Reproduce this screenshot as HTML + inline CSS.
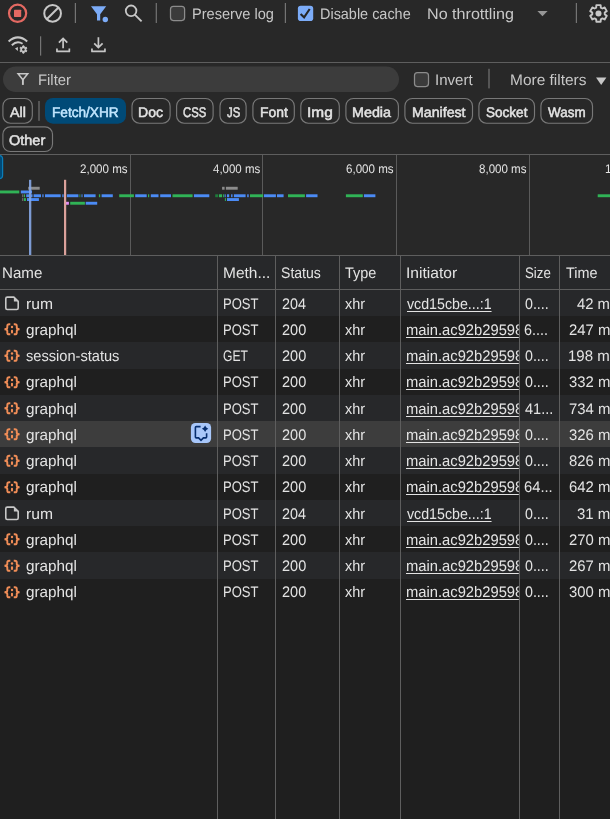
<!DOCTYPE html>
<html><head><meta charset="utf-8"><title>Network</title>
<style>
html,body{margin:0;padding:0;}
body{width:610px;height:819px;overflow:hidden;background:#282828;position:relative;font-family:"Liberation Sans",sans-serif;}
.t{position:absolute;white-space:pre;display:block;transform-origin:0 0;text-rendering:geometricPrecision;}
.a{position:absolute;}
#txt{position:absolute;left:0;top:0;width:610px;height:819px;overflow:hidden;will-change:transform;}
</style></head><body>
<svg class="a" style="left:0;top:0" width="610" height="819" viewBox="0 0 610 819">
<rect x="0" y="62" width="610" height="1" fill="#5e5e5e"/>
<circle cx="17.6" cy="13.3" r="8.6" fill="none" stroke="#e46962" stroke-width="2.2"/>
<rect x="14" y="9.7" width="7.2" height="7.2" rx="0.6" fill="#e46962"/>
<circle cx="52.6" cy="13.4" r="8.35" fill="none" stroke="#c7c7c7" stroke-width="2"/>
<line x1="46.7" y1="19.3" x2="58.5" y2="7.5" stroke="#c7c7c7" stroke-width="2"/>
<rect x="74.80" y="3.00" width="1.2" height="20.00" fill="#747474"/>
<path d="M91 6.3 H106.2 L100.2 14.2 V20.6 H97 V14.2 Z" fill="#7cacf8"/>
<circle cx="105.3" cy="19.5" r="2.7" fill="#7cacf8"/>
<circle cx="131.1" cy="10.8" r="5.3" fill="none" stroke="#c7c7c7" stroke-width="1.8"/>
<line x1="135" y1="14.8" x2="141.6" y2="21.4" stroke="#c7c7c7" stroke-width="1.9"/>
<rect x="155.70" y="3.00" width="1.2" height="20.00" fill="#747474"/>
<rect x="170.50" y="6.40" width="14.10" height="14.10" rx="2.9" fill="#3b3b3b" stroke="#8c8c8c" stroke-width="1.25"/>
<rect x="284.80" y="3.00" width="1.2" height="20.00" fill="#747474"/>
<rect x="297.90" y="5.80" width="15.30" height="15.30" rx="2.8" fill="#7cacf8"/>
<path d="M300.60 14.00 L304.10 17.30 L309.70 9.00" fill="none" stroke="#262626" stroke-width="2.1" />
<path d="M537.4 10.9 H547.6 L542.5 16.2 Z" fill="#969696"/>
<rect x="575.80" y="3.00" width="1.2" height="20.00" fill="#747474"/>
<path d="M596.36 5.12 L600.64 5.12 L600.82 7.59 L602.41 8.51 L604.64 7.43 L606.78 11.14 L604.73 12.53 L604.73 14.37 L606.78 15.76 L604.64 19.47 L602.41 18.39 L600.82 19.31 L600.64 21.78 L596.36 21.78 L596.18 19.31 L594.59 18.39 L592.36 19.47 L590.22 15.76 L592.27 14.37 L592.27 12.53 L590.22 11.14 L592.36 7.43 L594.59 8.51 L596.18 7.59 Z" fill="none" stroke="#c7c7c7" stroke-width="1.9" stroke-linejoin="round"/>
<circle cx="598.50" cy="13.45" r="3.00" fill="#c7c7c7"/>
<path d="M8.6 41.4 Q17.9 33.3 27.2 41.4" fill="none" stroke="#c7c7c7" stroke-width="2"/>
<path d="M11.8 45.2 Q17 40.2 22.6 43.8" fill="none" stroke="#c7c7c7" stroke-width="1.9"/>
<path d="M15.0 48.5 L17.9 47.0 L17.9 51.0 Z" fill="#c7c7c7"/>
<path d="M22.74 45.86 L24.06 45.86 L24.28 47.05 L25.08 47.51 L26.23 47.11 L26.88 48.25 L25.96 49.04 L25.96 49.96 L26.88 50.75 L26.23 51.89 L25.08 51.49 L24.28 51.95 L24.06 53.14 L22.74 53.14 L22.52 51.95 L21.72 51.49 L20.57 51.89 L19.92 50.75 L20.84 49.96 L20.84 49.04 L19.92 48.25 L20.57 47.11 L21.72 47.51 L22.52 47.05 Z" fill="#c7c7c7" stroke="#c7c7c7" stroke-width="0.9" stroke-linejoin="round"/>
<circle cx="23.40" cy="49.50" r="1.30" fill="#282828"/>
<rect x="40.00" y="36.30" width="1.2" height="19.30" fill="#747474"/>
<path d="M56.95 48.6 V51.4 H69.35 V48.6" fill="none" stroke="#c7c7c7" stroke-width="1.7" stroke-linejoin="round"/>
<path d="M63.1 48.2 V38.6 M58.9 42.6 L63.1 38.4 L67.3 42.6" fill="none" stroke="#c7c7c7" stroke-width="1.7"/>
<path d="M91.95 48.6 V51.4 H104.95 V48.6" fill="none" stroke="#c7c7c7" stroke-width="1.7" stroke-linejoin="round"/>
<path d="M98.4 37.3 V47.2 M94.2 43.4 L98.4 47.6 L102.6 43.4" fill="none" stroke="#c7c7c7" stroke-width="1.7"/>
<rect x="3" y="66.6" width="396" height="25.5" rx="12.75" fill="#3c3c3c"/>
<path d="M18.1 73.85 H27.7 L22.9 79.7 Z" fill="none" stroke="#c7c7c7" stroke-width="1.5" stroke-linejoin="miter"/>
<rect x="21.95" y="79.0" width="1.9" height="5.9" fill="#c7c7c7"/>
<rect x="414.50" y="72.50" width="14.00" height="14.00" rx="2.9" fill="#3b3b3b" stroke="#8c8c8c" stroke-width="1.25"/>
<rect x="488.40" y="68.80" width="1.2" height="19.60" fill="#747474"/>
<path d="M596 77.6 H606.4 L601.2 85 Z" fill="#c7c7c7"/>
<rect x="2.90" y="98.50" width="29.40" height="24.70" rx="7.5" fill="none" stroke="#787878" stroke-width="1.15"/>
<rect x="38.40" y="101.00" width="1.2" height="19.80" fill="#747474"/>
<rect x="45.00" y="98.00" width="81.00" height="25.70" rx="8" fill="#004a77"/>
<rect x="132.00" y="98.50" width="38.10" height="24.70" rx="7.5" fill="none" stroke="#787878" stroke-width="1.15"/>
<rect x="176.60" y="98.50" width="36.50" height="24.70" rx="7.5" fill="none" stroke="#787878" stroke-width="1.15"/>
<rect x="220.00" y="98.50" width="26.10" height="24.70" rx="7.5" fill="none" stroke="#787878" stroke-width="1.15"/>
<rect x="252.90" y="98.50" width="41.40" height="24.70" rx="7.5" fill="none" stroke="#787878" stroke-width="1.15"/>
<rect x="300.80" y="98.50" width="38.50" height="24.70" rx="7.5" fill="none" stroke="#787878" stroke-width="1.15"/>
<rect x="345.90" y="98.50" width="52.50" height="24.70" rx="7.5" fill="none" stroke="#787878" stroke-width="1.15"/>
<rect x="404.90" y="98.50" width="67.60" height="24.70" rx="7.5" fill="none" stroke="#787878" stroke-width="1.15"/>
<rect x="478.90" y="98.50" width="55.60" height="24.70" rx="7.5" fill="none" stroke="#787878" stroke-width="1.15"/>
<rect x="540.90" y="98.50" width="51.60" height="24.70" rx="7.5" fill="none" stroke="#787878" stroke-width="1.15"/>
<rect x="2.90" y="126.80" width="49.60" height="24.70" rx="7.5" fill="none" stroke="#787878" stroke-width="1.15"/>
<rect x="0" y="154" width="610" height="1" fill="#5e5e5e"/>
<rect x="130" y="155" width="1" height="100" fill="#5a5a5a"/>
<rect x="262" y="155" width="1" height="100" fill="#5a5a5a"/>
<rect x="396" y="155" width="1" height="100" fill="#5a5a5a"/>
<rect x="529" y="155" width="1" height="100" fill="#5a5a5a"/>
<rect x="-6" y="155.6" width="8.6" height="23" rx="3" fill="#004a77" stroke="#0a7db8" stroke-width="1.2"/>
<rect x="28.20" y="186.80" width="11.50" height="2.90" fill="#8c8c8c"/>
<rect x="0.00" y="190.50" width="19.30" height="2.90" fill="#30b356"/>
<rect x="20.80" y="190.50" width="11.20" height="2.90" fill="#4b8bf5"/>
<rect x="22.00" y="194.30" width="1.40" height="2.90" fill="#666"/>
<rect x="24.00" y="194.30" width="1.00" height="2.90" fill="#30b356"/>
<rect x="26.20" y="194.30" width="3.00" height="2.90" fill="#4b8bf5"/>
<rect x="31.00" y="194.30" width="1.50" height="2.90" fill="#4b8bf5"/>
<rect x="33.60" y="194.30" width="7.40" height="2.90" fill="#4b8bf5"/>
<rect x="42.30" y="194.30" width="1.30" height="2.90" fill="#4b8bf5"/>
<rect x="45.00" y="194.30" width="15.70" height="2.90" fill="#4b8bf5"/>
<rect x="62.30" y="194.30" width="1.30" height="2.90" fill="#4b8bf5"/>
<rect x="66.90" y="194.30" width="11.50" height="2.90" fill="#4b8bf5"/>
<rect x="79.50" y="194.30" width="0.80" height="2.90" fill="#30b356"/>
<rect x="81.50" y="194.30" width="1.00" height="2.90" fill="#4b8bf5"/>
<rect x="84.00" y="194.30" width="11.60" height="2.90" fill="#4b8bf5"/>
<rect x="98.90" y="194.30" width="1.30" height="2.90" fill="#30b356"/>
<rect x="101.60" y="194.30" width="11.20" height="2.90" fill="#4b8bf5"/>
<rect x="119.20" y="194.30" width="14.70" height="2.90" fill="#30b356"/>
<rect x="135.20" y="194.30" width="11.50" height="2.90" fill="#4b8bf5"/>
<rect x="148.00" y="194.30" width="1.20" height="2.90" fill="#30b356"/>
<rect x="150.80" y="194.30" width="7.70" height="2.90" fill="#4b8bf5"/>
<rect x="160.20" y="194.30" width="10.80" height="2.90" fill="#4b8bf5"/>
<rect x="172.50" y="194.30" width="20.10" height="2.90" fill="#30b356"/>
<rect x="193.90" y="194.30" width="15.40" height="2.90" fill="#4b8bf5"/>
<rect x="215.20" y="194.30" width="2.80" height="2.90" fill="#1e7a3a"/>
<rect x="218.90" y="194.30" width="3.20" height="2.90" fill="#30b356"/>
<rect x="223.00" y="194.30" width="0.90" height="2.90" fill="#30b356"/>
<rect x="224.60" y="194.30" width="1.10" height="2.90" fill="#4b8bf5"/>
<rect x="227.00" y="194.30" width="2.20" height="2.90" fill="#4b8bf5"/>
<rect x="231.10" y="194.30" width="1.40" height="2.90" fill="#4b8bf5"/>
<rect x="233.90" y="194.30" width="11.70" height="2.90" fill="#4b8bf5"/>
<rect x="247.20" y="194.30" width="1.50" height="2.90" fill="#4b8bf5"/>
<rect x="250.00" y="194.30" width="13.10" height="2.90" fill="#30b356"/>
<rect x="263.90" y="194.30" width="12.00" height="2.90" fill="#4b8bf5"/>
<rect x="277.00" y="194.30" width="6.60" height="2.90" fill="#4b8bf5"/>
<rect x="288.00" y="194.30" width="16.90" height="2.90" fill="#30b356"/>
<rect x="306.10" y="194.30" width="11.40" height="2.90" fill="#4b8bf5"/>
<rect x="345.90" y="194.30" width="16.90" height="2.90" fill="#30b356"/>
<rect x="363.90" y="194.30" width="11.50" height="2.90" fill="#4b8bf5"/>
<rect x="597.70" y="194.30" width="12.30" height="2.90" fill="#30b356"/>
<rect x="22.00" y="198.10" width="1.40" height="2.90" fill="#666"/>
<rect x="24.00" y="198.10" width="1.90" height="2.90" fill="#30b356"/>
<rect x="27.00" y="198.10" width="11.90" height="2.90" fill="#4b8bf5"/>
<rect x="222.10" y="186.80" width="2.50" height="2.90" fill="#8c8c8c"/>
<rect x="225.90" y="186.80" width="11.80" height="2.90" fill="#8c8c8c"/>
<rect x="224.90" y="198.10" width="1.00" height="2.90" fill="#30b356"/>
<rect x="227.00" y="198.10" width="11.90" height="2.90" fill="#4b8bf5"/>
<rect x="66.00" y="201.80" width="2.90" height="2.90" fill="#e08cf5"/>
<rect x="70.20" y="201.80" width="14.70" height="2.90" fill="#30b356"/>
<rect x="85.70" y="201.80" width="11.50" height="2.90" fill="#4b8bf5"/>
<rect x="29" y="179.8" width="2.3" height="75.7" fill="#86a7e6" opacity="0.9"/>
<rect x="64" y="179.8" width="2.2" height="75.7" fill="#dba19b"/>
<rect x="0" y="255" width="610" height="35" fill="#27282a"/>
<rect x="0" y="290" width="610" height="529" fill="#1f1f1f"/>
<rect x="0" y="290" width="610" height="26" fill="#27282a"/>
<rect x="0" y="342" width="610" height="27" fill="#27282a"/>
<rect x="0" y="395" width="610" height="26" fill="#27282a"/>
<rect x="0" y="421" width="610" height="26" fill="#3d3d3d"/>
<rect x="0" y="447" width="610" height="27" fill="#27282a"/>
<rect x="0" y="500" width="610" height="26" fill="#27282a"/>
<rect x="0" y="552" width="610" height="27" fill="#27282a"/>
<rect x="0" y="255" width="610" height="1" fill="#5e5e5e"/>
<rect x="0" y="289" width="610" height="1" fill="#5e5e5e"/>
<rect x="217" y="256" width="1" height="563" fill="#5e5e5e"/>
<rect x="275" y="256" width="1" height="563" fill="#5e5e5e"/>
<rect x="339" y="256" width="1" height="563" fill="#5e5e5e"/>
<rect x="400" y="256" width="1" height="563" fill="#5e5e5e"/>
<rect x="519" y="256" width="1" height="563" fill="#5e5e5e"/>
<rect x="559" y="256" width="1" height="563" fill="#5e5e5e"/>
<path d="M7.30 297.10 H13.90 L18.20 301.40 V308.00 Q18.20 309.50 16.70 309.50 H7.30 Q5.80 309.50 5.80 308.00 V298.60 Q5.80 297.10 7.30 297.10 Z" fill="none" stroke="#c7c7c7" stroke-width="1.6" stroke-linejoin="round"/>
<path d="M13.90 297.10 V301.40 H18.20 Z" fill="#c7c7c7"/>
<path d="M10.30 324.30 H9.10 Q7.30 324.30 7.30 325.90 V327.60 Q7.30 329.30 4.45 329.30 Q7.30 329.30 7.30 331.00 V332.70 Q7.30 334.30 9.10 334.30 H10.30" fill="none" stroke="#f08d57" stroke-width="1.9"/>
<path d="M13.75 324.30 H14.95 Q16.75 324.30 16.75 325.90 V327.60 Q16.75 329.30 19.60 329.30 Q16.75 329.30 16.75 331.00 V332.70 Q16.75 334.30 14.95 334.30 H13.75" fill="none" stroke="#f08d57" stroke-width="1.9"/>
<circle cx="12.0" cy="327.00" r="1.2" fill="#f08d57"/>
<path d="M12.0 330.90 V332.50" stroke="#f08d57" stroke-width="2.1" stroke-linecap="round" fill="none"/>
<path d="M10.30 350.80 H9.10 Q7.30 350.80 7.30 352.40 V354.10 Q7.30 355.80 4.45 355.80 Q7.30 355.80 7.30 357.50 V359.20 Q7.30 360.80 9.10 360.80 H10.30" fill="none" stroke="#f08d57" stroke-width="1.9"/>
<path d="M13.75 350.80 H14.95 Q16.75 350.80 16.75 352.40 V354.10 Q16.75 355.80 19.60 355.80 Q16.75 355.80 16.75 357.50 V359.20 Q16.75 360.80 14.95 360.80 H13.75" fill="none" stroke="#f08d57" stroke-width="1.9"/>
<circle cx="12.0" cy="353.50" r="1.2" fill="#f08d57"/>
<path d="M12.0 357.40 V359.00" stroke="#f08d57" stroke-width="2.1" stroke-linecap="round" fill="none"/>
<path d="M10.30 377.30 H9.10 Q7.30 377.30 7.30 378.90 V380.60 Q7.30 382.30 4.45 382.30 Q7.30 382.30 7.30 384.00 V385.70 Q7.30 387.30 9.10 387.30 H10.30" fill="none" stroke="#f08d57" stroke-width="1.9"/>
<path d="M13.75 377.30 H14.95 Q16.75 377.30 16.75 378.90 V380.60 Q16.75 382.30 19.60 382.30 Q16.75 382.30 16.75 384.00 V385.70 Q16.75 387.30 14.95 387.30 H13.75" fill="none" stroke="#f08d57" stroke-width="1.9"/>
<circle cx="12.0" cy="380.00" r="1.2" fill="#f08d57"/>
<path d="M12.0 383.90 V385.50" stroke="#f08d57" stroke-width="2.1" stroke-linecap="round" fill="none"/>
<path d="M10.30 403.30 H9.10 Q7.30 403.30 7.30 404.90 V406.60 Q7.30 408.30 4.45 408.30 Q7.30 408.30 7.30 410.00 V411.70 Q7.30 413.30 9.10 413.30 H10.30" fill="none" stroke="#f08d57" stroke-width="1.9"/>
<path d="M13.75 403.30 H14.95 Q16.75 403.30 16.75 404.90 V406.60 Q16.75 408.30 19.60 408.30 Q16.75 408.30 16.75 410.00 V411.70 Q16.75 413.30 14.95 413.30 H13.75" fill="none" stroke="#f08d57" stroke-width="1.9"/>
<circle cx="12.0" cy="406.00" r="1.2" fill="#f08d57"/>
<path d="M12.0 409.90 V411.50" stroke="#f08d57" stroke-width="2.1" stroke-linecap="round" fill="none"/>
<path d="M10.30 429.30 H9.10 Q7.30 429.30 7.30 430.90 V432.60 Q7.30 434.30 4.45 434.30 Q7.30 434.30 7.30 436.00 V437.70 Q7.30 439.30 9.10 439.30 H10.30" fill="none" stroke="#f08d57" stroke-width="1.9"/>
<path d="M13.75 429.30 H14.95 Q16.75 429.30 16.75 430.90 V432.60 Q16.75 434.30 19.60 434.30 Q16.75 434.30 16.75 436.00 V437.70 Q16.75 439.30 14.95 439.30 H13.75" fill="none" stroke="#f08d57" stroke-width="1.9"/>
<circle cx="12.0" cy="432.00" r="1.2" fill="#f08d57"/>
<path d="M12.0 435.90 V437.50" stroke="#f08d57" stroke-width="2.1" stroke-linecap="round" fill="none"/>
<path d="M10.30 455.80 H9.10 Q7.30 455.80 7.30 457.40 V459.10 Q7.30 460.80 4.45 460.80 Q7.30 460.80 7.30 462.50 V464.20 Q7.30 465.80 9.10 465.80 H10.30" fill="none" stroke="#f08d57" stroke-width="1.9"/>
<path d="M13.75 455.80 H14.95 Q16.75 455.80 16.75 457.40 V459.10 Q16.75 460.80 19.60 460.80 Q16.75 460.80 16.75 462.50 V464.20 Q16.75 465.80 14.95 465.80 H13.75" fill="none" stroke="#f08d57" stroke-width="1.9"/>
<circle cx="12.0" cy="458.50" r="1.2" fill="#f08d57"/>
<path d="M12.0 462.40 V464.00" stroke="#f08d57" stroke-width="2.1" stroke-linecap="round" fill="none"/>
<path d="M10.30 482.30 H9.10 Q7.30 482.30 7.30 483.90 V485.60 Q7.30 487.30 4.45 487.30 Q7.30 487.30 7.30 489.00 V490.70 Q7.30 492.30 9.10 492.30 H10.30" fill="none" stroke="#f08d57" stroke-width="1.9"/>
<path d="M13.75 482.30 H14.95 Q16.75 482.30 16.75 483.90 V485.60 Q16.75 487.30 19.60 487.30 Q16.75 487.30 16.75 489.00 V490.70 Q16.75 492.30 14.95 492.30 H13.75" fill="none" stroke="#f08d57" stroke-width="1.9"/>
<circle cx="12.0" cy="485.00" r="1.2" fill="#f08d57"/>
<path d="M12.0 488.90 V490.50" stroke="#f08d57" stroke-width="2.1" stroke-linecap="round" fill="none"/>
<path d="M7.30 507.10 H13.90 L18.20 511.40 V518.00 Q18.20 519.50 16.70 519.50 H7.30 Q5.80 519.50 5.80 518.00 V508.60 Q5.80 507.10 7.30 507.10 Z" fill="none" stroke="#c7c7c7" stroke-width="1.6" stroke-linejoin="round"/>
<path d="M13.90 507.10 V511.40 H18.20 Z" fill="#c7c7c7"/>
<path d="M10.30 534.30 H9.10 Q7.30 534.30 7.30 535.90 V537.60 Q7.30 539.30 4.45 539.30 Q7.30 539.30 7.30 541.00 V542.70 Q7.30 544.30 9.10 544.30 H10.30" fill="none" stroke="#f08d57" stroke-width="1.9"/>
<path d="M13.75 534.30 H14.95 Q16.75 534.30 16.75 535.90 V537.60 Q16.75 539.30 19.60 539.30 Q16.75 539.30 16.75 541.00 V542.70 Q16.75 544.30 14.95 544.30 H13.75" fill="none" stroke="#f08d57" stroke-width="1.9"/>
<circle cx="12.0" cy="537.00" r="1.2" fill="#f08d57"/>
<path d="M12.0 540.90 V542.50" stroke="#f08d57" stroke-width="2.1" stroke-linecap="round" fill="none"/>
<path d="M10.30 560.80 H9.10 Q7.30 560.80 7.30 562.40 V564.10 Q7.30 565.80 4.45 565.80 Q7.30 565.80 7.30 567.50 V569.20 Q7.30 570.80 9.10 570.80 H10.30" fill="none" stroke="#f08d57" stroke-width="1.9"/>
<path d="M13.75 560.80 H14.95 Q16.75 560.80 16.75 562.40 V564.10 Q16.75 565.80 19.60 565.80 Q16.75 565.80 16.75 567.50 V569.20 Q16.75 570.80 14.95 570.80 H13.75" fill="none" stroke="#f08d57" stroke-width="1.9"/>
<circle cx="12.0" cy="563.50" r="1.2" fill="#f08d57"/>
<path d="M12.0 567.40 V569.00" stroke="#f08d57" stroke-width="2.1" stroke-linecap="round" fill="none"/>
<path d="M10.30 587.30 H9.10 Q7.30 587.30 7.30 588.90 V590.60 Q7.30 592.30 4.45 592.30 Q7.30 592.30 7.30 594.00 V595.70 Q7.30 597.30 9.10 597.30 H10.30" fill="none" stroke="#f08d57" stroke-width="1.9"/>
<path d="M13.75 587.30 H14.95 Q16.75 587.30 16.75 588.90 V590.60 Q16.75 592.30 19.60 592.30 Q16.75 592.30 16.75 594.00 V595.70 Q16.75 597.30 14.95 597.30 H13.75" fill="none" stroke="#f08d57" stroke-width="1.9"/>
<circle cx="12.0" cy="590.00" r="1.2" fill="#f08d57"/>
<path d="M12.0 593.90 V595.50" stroke="#f08d57" stroke-width="2.1" stroke-linecap="round" fill="none"/>
<rect x="190.9" y="422.9" width="20.2" height="20.2" rx="4.5" fill="#a8c7fa"/>
<path d="M200.6 426.6 H196.3 Q195.4 426.6 195.4 427.5 V437 Q195.4 437.9 196.3 437.9 H198.6 L201 440.3 L203.4 437.9 H205.7 Q206.6 437.9 206.6 437 V433.2" fill="none" stroke="#062e6f" stroke-width="1.6"/>
<path d="M205.10 425.60 Q205.95 427.95 208.30 428.80 Q205.95 429.65 205.10 432.00 Q204.25 429.65 201.90 428.80 Q204.25 427.95 205.10 425.60 Z" fill="#062e6f"/>
</svg>
<div id="txt">
<span class="t" id="pres" style="left:191.65px;top:7.00px;font-size:15.3px;line-height:16px;color:#c7c7c7;transform:scaleX(0.9537);">Preserve log</span>
<span class="t" id="dis" style="left:320.46px;top:7.00px;font-size:15.3px;line-height:16px;color:#c7c7c7;transform:scaleX(0.9435);">Disable cache</span>
<span class="t" id="thr" style="left:426.84px;top:7.00px;font-size:15.3px;line-height:16px;color:#c7c7c7;transform:scaleX(1.0537);">No throttling</span>
<span class="t" id="filt" style="left:37.83px;top:73.00px;font-size:15.3px;line-height:16px;color:#c7c7c7;transform:scaleX(0.9696);">Filter</span>
<span class="t" id="inv" style="left:435.35px;top:73.00px;font-size:15.3px;line-height:16px;color:#c7c7c7;transform:scaleX(0.9835);">Invert</span>
<span class="t" id="more" style="left:510.49px;top:73.00px;font-size:15.3px;line-height:16px;color:#c7c7c7;transform:scaleX(1.0109);">More filters</span>
<span class="t" id="c_all" style="left:10.05px;top:105.00px;font-size:14px;line-height:14px;color:#e3e3e3;transform:scaleX(1.0188);-webkit-text-stroke:0.5px currentColor;">All</span>
<span class="t" id="c_fetch" style="left:52.13px;top:105.00px;font-size:14px;line-height:14px;color:#c2e7ff;transform:scaleX(0.9717);-webkit-text-stroke:0.5px currentColor;">Fetch/XHR</span>
<span class="t" id="c_doc" style="left:138.20px;top:105.00px;font-size:14px;line-height:14px;color:#e3e3e3;transform:scaleX(1.0042);-webkit-text-stroke:0.5px currentColor;">Doc</span>
<span class="t" id="c_css" style="left:183.46px;top:105.00px;font-size:14px;line-height:14px;color:#e3e3e3;transform:scaleX(0.8055);-webkit-text-stroke:0.5px currentColor;">CSS</span>
<span class="t" id="c_js" style="left:226.71px;top:105.00px;font-size:14px;line-height:14px;color:#e3e3e3;transform:scaleX(0.8110);-webkit-text-stroke:0.5px currentColor;">JS</span>
<span class="t" id="c_font" style="left:259.81px;top:105.00px;font-size:14px;line-height:14px;color:#e3e3e3;transform:scaleX(0.9938);-webkit-text-stroke:0.5px currentColor;">Font</span>
<span class="t" id="c_img" style="left:307.10px;top:105.00px;font-size:14px;line-height:14px;color:#e3e3e3;transform:scaleX(1.1019);-webkit-text-stroke:0.5px currentColor;">Img</span>
<span class="t" id="c_media" style="left:352.09px;top:105.00px;font-size:14px;line-height:14px;color:#e3e3e3;transform:scaleX(1.0233);-webkit-text-stroke:0.5px currentColor;">Media</span>
<span class="t" id="c_man" style="left:411.70px;top:105.00px;font-size:14px;line-height:14px;color:#e3e3e3;transform:scaleX(1.0119);-webkit-text-stroke:0.5px currentColor;">Manifest</span>
<span class="t" id="c_sock" style="left:485.83px;top:105.00px;font-size:14px;line-height:14px;color:#e3e3e3;transform:scaleX(0.9677);-webkit-text-stroke:0.5px currentColor;">Socket</span>
<span class="t" id="c_wasm" style="left:548.25px;top:105.00px;font-size:14px;line-height:14px;color:#e3e3e3;transform:scaleX(0.9599);-webkit-text-stroke:0.5px currentColor;">Wasm</span>
<span class="t" id="c_other" style="left:9.23px;top:133.00px;font-size:14px;line-height:14px;color:#e3e3e3;transform:scaleX(1.0344);-webkit-text-stroke:0.5px currentColor;">Other</span>
<span class="t" id="ov0" style="left:79.61px;top:163.00px;font-size:12.5px;line-height:13px;color:#e3e3e3;transform:scaleX(0.9245);">2,000 ms</span>
<span class="t" id="ov1" style="left:213.00px;top:163.00px;font-size:12.5px;line-height:13px;color:#e3e3e3;transform:scaleX(0.9184);">4,000 ms</span>
<span class="t" id="ov2" style="left:345.72px;top:163.00px;font-size:12.5px;line-height:13px;color:#e3e3e3;transform:scaleX(0.9252);">6,000 ms</span>
<span class="t" id="ov3" style="left:478.86px;top:163.00px;font-size:12.5px;line-height:13px;color:#e3e3e3;transform:scaleX(0.9238);">8,000 ms</span>
<span class="t" id="ov4" style="left:604.56px;top:163.00px;font-size:12.5px;line-height:13px;color:#e3e3e3;transform:scaleX(0.9398);">10,000 ms</span>
<span class="t" id="h_name" style="left:2.41px;top:266.00px;font-size:15.3px;line-height:16px;color:#e3e3e3;transform:scaleX(0.9898);">Name</span>
<span class="t" id="h_meth" style="left:223.09px;top:266.00px;font-size:15.3px;line-height:16px;color:#e3e3e3;transform:scaleX(1.0112);">Meth...</span>
<span class="t" id="h_stat" style="left:281.27px;top:266.00px;font-size:15.3px;line-height:16px;color:#e3e3e3;transform:scaleX(0.9194);">Status</span>
<span class="t" id="h_type" style="left:344.65px;top:266.00px;font-size:15.3px;line-height:16px;color:#e3e3e3;transform:scaleX(0.9434);">Type</span>
<span class="t" id="h_init" style="left:405.70px;top:266.00px;font-size:15.3px;line-height:16px;color:#e3e3e3;transform:scaleX(1.0199);">Initiator</span>
<span class="t" id="h_size" style="left:525.12px;top:266.00px;font-size:15.3px;line-height:16px;color:#e3e3e3;transform:scaleX(0.8660);">Size</span>
<span class="t" id="h_time" style="left:565.65px;top:266.00px;font-size:15.3px;line-height:16px;color:#e3e3e3;transform:scaleX(0.9408);">Time</span>
<span class="t" id="n0" style="left:25.58px;top:297.00px;font-size:15.3px;line-height:16px;color:#e3e3e3;transform:scaleX(1.0249);">rum</span>
<span class="t" id="m0" style="left:223.06px;top:297.00px;font-size:15.3px;line-height:16px;color:#e3e3e3;transform:scaleX(0.8516);">POST</span>
<span class="t" id="s0" style="left:281.60px;top:297.00px;font-size:15.3px;line-height:16px;color:#e3e3e3;transform:scaleX(0.9388);">204</span>
<span class="t" id="ty0" style="left:344.65px;top:297.00px;font-size:15.3px;line-height:16px;color:#e3e3e3;transform:scaleX(0.9438);">xhr</span>
<span class="t" id="i0" style="left:406.90px;top:297.00px;font-size:15.3px;line-height:16px;color:#e3e3e3;transform:scaleX(0.9292);text-decoration:underline;text-underline-offset:2px;text-decoration-thickness:1px;">vcd15cbe...:1</span>
<span class="t" id="z0" style="left:524.65px;top:297.00px;font-size:15.3px;line-height:16px;color:#e3e3e3;transform:scaleX(0.9295);">0....</span>
<span class="t" id="tm0" style="left:577.32px;top:297.00px;font-size:15.3px;line-height:16px;color:#e3e3e3;transform:scaleX(0.9683);">42 ms</span>
<span class="t" id="n1" style="left:26.14px;top:323.00px;font-size:15.3px;line-height:16px;color:#e3e3e3;transform:scaleX(0.9976);">graphql</span>
<span class="t" id="m1" style="left:223.06px;top:323.00px;font-size:15.3px;line-height:16px;color:#e3e3e3;transform:scaleX(0.8516);">POST</span>
<span class="t" id="s1" style="left:281.60px;top:323.00px;font-size:15.3px;line-height:16px;color:#e3e3e3;transform:scaleX(0.9482);">200</span>
<span class="t" id="ty1" style="left:344.65px;top:323.00px;font-size:15.3px;line-height:16px;color:#e3e3e3;transform:scaleX(0.9438);">xhr</span>
<span class="t" id="i1" style="left:406.04px;top:323.00px;font-size:15.3px;line-height:16px;color:#e3e3e3;transform:scaleX(0.9642);text-decoration:underline;text-underline-offset:2px;text-decoration-thickness:1px;width:116.95px;overflow:hidden;padding-bottom:5px;">main.ac92b29598</span>
<span class="t" id="z1" style="left:524.48px;top:323.00px;font-size:15.3px;line-height:16px;color:#e3e3e3;transform:scaleX(0.9365);">6....</span>
<span class="t" id="tm1" style="left:568.88px;top:323.00px;font-size:15.3px;line-height:16px;color:#e3e3e3;transform:scaleX(0.9724);">247 ms</span>
<span class="t" id="n2" style="left:25.53px;top:349.00px;font-size:15.3px;line-height:16px;color:#e3e3e3;transform:scaleX(0.9556);">session-status</span>
<span class="t" id="m2" style="left:223.47px;top:349.00px;font-size:15.3px;line-height:16px;color:#e3e3e3;transform:scaleX(0.7938);">GET</span>
<span class="t" id="s2" style="left:281.60px;top:349.00px;font-size:15.3px;line-height:16px;color:#e3e3e3;transform:scaleX(0.9482);">200</span>
<span class="t" id="ty2" style="left:344.65px;top:349.00px;font-size:15.3px;line-height:16px;color:#e3e3e3;transform:scaleX(0.9438);">xhr</span>
<span class="t" id="i2" style="left:406.04px;top:349.00px;font-size:15.3px;line-height:16px;color:#e3e3e3;transform:scaleX(0.9642);text-decoration:underline;text-underline-offset:2px;text-decoration-thickness:1px;width:116.95px;overflow:hidden;padding-bottom:5px;">main.ac92b29598</span>
<span class="t" id="z2" style="left:524.65px;top:349.00px;font-size:15.3px;line-height:16px;color:#e3e3e3;transform:scaleX(0.9295);">0....</span>
<span class="t" id="tm2" style="left:568.49px;top:349.00px;font-size:15.3px;line-height:16px;color:#e3e3e3;transform:scaleX(0.9803);">198 ms</span>
<span class="t" id="n3" style="left:26.14px;top:375.00px;font-size:15.3px;line-height:16px;color:#e3e3e3;transform:scaleX(0.9976);">graphql</span>
<span class="t" id="m3" style="left:223.06px;top:375.00px;font-size:15.3px;line-height:16px;color:#e3e3e3;transform:scaleX(0.8516);">POST</span>
<span class="t" id="s3" style="left:281.60px;top:375.00px;font-size:15.3px;line-height:16px;color:#e3e3e3;transform:scaleX(0.9482);">200</span>
<span class="t" id="ty3" style="left:344.65px;top:375.00px;font-size:15.3px;line-height:16px;color:#e3e3e3;transform:scaleX(0.9438);">xhr</span>
<span class="t" id="i3" style="left:406.04px;top:375.00px;font-size:15.3px;line-height:16px;color:#e3e3e3;transform:scaleX(0.9642);text-decoration:underline;text-underline-offset:2px;text-decoration-thickness:1px;width:116.95px;overflow:hidden;padding-bottom:5px;">main.ac92b29598</span>
<span class="t" id="z3" style="left:524.65px;top:375.00px;font-size:15.3px;line-height:16px;color:#e3e3e3;transform:scaleX(0.9295);">0....</span>
<span class="t" id="tm3" style="left:568.86px;top:375.00px;font-size:15.3px;line-height:16px;color:#e3e3e3;transform:scaleX(0.9728);">332 ms</span>
<span class="t" id="n4" style="left:26.14px;top:402.00px;font-size:15.3px;line-height:16px;color:#e3e3e3;transform:scaleX(0.9976);">graphql</span>
<span class="t" id="m4" style="left:223.06px;top:402.00px;font-size:15.3px;line-height:16px;color:#e3e3e3;transform:scaleX(0.8516);">POST</span>
<span class="t" id="s4" style="left:281.60px;top:402.00px;font-size:15.3px;line-height:16px;color:#e3e3e3;transform:scaleX(0.9482);">200</span>
<span class="t" id="ty4" style="left:344.65px;top:402.00px;font-size:15.3px;line-height:16px;color:#e3e3e3;transform:scaleX(0.9438);">xhr</span>
<span class="t" id="i4" style="left:406.04px;top:402.00px;font-size:15.3px;line-height:16px;color:#e3e3e3;transform:scaleX(0.9642);text-decoration:underline;text-underline-offset:2px;text-decoration-thickness:1px;width:116.95px;overflow:hidden;padding-bottom:5px;">main.ac92b29598</span>
<span class="t" id="z4" style="left:524.82px;top:402.00px;font-size:15.3px;line-height:16px;color:#e3e3e3;transform:scaleX(0.9503);">41...</span>
<span class="t" id="tm4" style="left:568.78px;top:402.00px;font-size:15.3px;line-height:16px;color:#e3e3e3;transform:scaleX(0.9744);">734 ms</span>
<span class="t" id="n5" style="left:26.14px;top:428.00px;font-size:15.3px;line-height:16px;color:#e3e3e3;transform:scaleX(0.9976);">graphql</span>
<span class="t" id="m5" style="left:223.06px;top:428.00px;font-size:15.3px;line-height:16px;color:#e3e3e3;transform:scaleX(0.8516);">POST</span>
<span class="t" id="s5" style="left:281.60px;top:428.00px;font-size:15.3px;line-height:16px;color:#e3e3e3;transform:scaleX(0.9482);">200</span>
<span class="t" id="ty5" style="left:344.65px;top:428.00px;font-size:15.3px;line-height:16px;color:#e3e3e3;transform:scaleX(0.9438);">xhr</span>
<span class="t" id="i5" style="left:406.04px;top:428.00px;font-size:15.3px;line-height:16px;color:#e3e3e3;transform:scaleX(0.9642);text-decoration:underline;text-underline-offset:2px;text-decoration-thickness:1px;width:116.95px;overflow:hidden;padding-bottom:5px;">main.ac92b29598</span>
<span class="t" id="z5" style="left:524.65px;top:428.00px;font-size:15.3px;line-height:16px;color:#e3e3e3;transform:scaleX(0.9295);">0....</span>
<span class="t" id="tm5" style="left:568.86px;top:428.00px;font-size:15.3px;line-height:16px;color:#e3e3e3;transform:scaleX(0.9728);">326 ms</span>
<span class="t" id="n6" style="left:26.14px;top:454.00px;font-size:15.3px;line-height:16px;color:#e3e3e3;transform:scaleX(0.9976);">graphql</span>
<span class="t" id="m6" style="left:223.06px;top:454.00px;font-size:15.3px;line-height:16px;color:#e3e3e3;transform:scaleX(0.8516);">POST</span>
<span class="t" id="s6" style="left:281.60px;top:454.00px;font-size:15.3px;line-height:16px;color:#e3e3e3;transform:scaleX(0.9482);">200</span>
<span class="t" id="ty6" style="left:344.65px;top:454.00px;font-size:15.3px;line-height:16px;color:#e3e3e3;transform:scaleX(0.9438);">xhr</span>
<span class="t" id="i6" style="left:406.04px;top:454.00px;font-size:15.3px;line-height:16px;color:#e3e3e3;transform:scaleX(0.9642);text-decoration:underline;text-underline-offset:2px;text-decoration-thickness:1px;width:116.95px;overflow:hidden;padding-bottom:5px;">main.ac92b29598</span>
<span class="t" id="z6" style="left:524.65px;top:454.00px;font-size:15.3px;line-height:16px;color:#e3e3e3;transform:scaleX(0.9295);">0....</span>
<span class="t" id="tm6" style="left:568.92px;top:454.00px;font-size:15.3px;line-height:16px;color:#e3e3e3;transform:scaleX(0.9716);">826 ms</span>
<span class="t" id="n7" style="left:26.14px;top:480.00px;font-size:15.3px;line-height:16px;color:#e3e3e3;transform:scaleX(0.9976);">graphql</span>
<span class="t" id="m7" style="left:223.06px;top:480.00px;font-size:15.3px;line-height:16px;color:#e3e3e3;transform:scaleX(0.8516);">POST</span>
<span class="t" id="s7" style="left:281.60px;top:480.00px;font-size:15.3px;line-height:16px;color:#e3e3e3;transform:scaleX(0.9482);">200</span>
<span class="t" id="ty7" style="left:344.65px;top:480.00px;font-size:15.3px;line-height:16px;color:#e3e3e3;transform:scaleX(0.9438);">xhr</span>
<span class="t" id="i7" style="left:406.04px;top:480.00px;font-size:15.3px;line-height:16px;color:#e3e3e3;transform:scaleX(0.9642);text-decoration:underline;text-underline-offset:2px;text-decoration-thickness:1px;width:116.95px;overflow:hidden;padding-bottom:5px;">main.ac92b29598</span>
<span class="t" id="z7" style="left:524.46px;top:480.00px;font-size:15.3px;line-height:16px;color:#e3e3e3;transform:scaleX(0.9629);">64...</span>
<span class="t" id="tm7" style="left:568.85px;top:480.00px;font-size:15.3px;line-height:16px;color:#e3e3e3;transform:scaleX(0.9729);">642 ms</span>
<span class="t" id="n8" style="left:25.58px;top:507.00px;font-size:15.3px;line-height:16px;color:#e3e3e3;transform:scaleX(1.0249);">rum</span>
<span class="t" id="m8" style="left:223.06px;top:507.00px;font-size:15.3px;line-height:16px;color:#e3e3e3;transform:scaleX(0.8516);">POST</span>
<span class="t" id="s8" style="left:281.60px;top:507.00px;font-size:15.3px;line-height:16px;color:#e3e3e3;transform:scaleX(0.9388);">204</span>
<span class="t" id="ty8" style="left:344.65px;top:507.00px;font-size:15.3px;line-height:16px;color:#e3e3e3;transform:scaleX(0.9438);">xhr</span>
<span class="t" id="i8" style="left:406.90px;top:507.00px;font-size:15.3px;line-height:16px;color:#e3e3e3;transform:scaleX(0.9292);text-decoration:underline;text-underline-offset:2px;text-decoration-thickness:1px;">vcd15cbe...:1</span>
<span class="t" id="z8" style="left:524.65px;top:507.00px;font-size:15.3px;line-height:16px;color:#e3e3e3;transform:scaleX(0.9295);">0....</span>
<span class="t" id="tm8" style="left:576.95px;top:507.00px;font-size:15.3px;line-height:16px;color:#e3e3e3;transform:scaleX(0.9771);">31 ms</span>
<span class="t" id="n9" style="left:26.14px;top:533.00px;font-size:15.3px;line-height:16px;color:#e3e3e3;transform:scaleX(0.9976);">graphql</span>
<span class="t" id="m9" style="left:223.06px;top:533.00px;font-size:15.3px;line-height:16px;color:#e3e3e3;transform:scaleX(0.8516);">POST</span>
<span class="t" id="s9" style="left:281.60px;top:533.00px;font-size:15.3px;line-height:16px;color:#e3e3e3;transform:scaleX(0.9482);">200</span>
<span class="t" id="ty9" style="left:344.65px;top:533.00px;font-size:15.3px;line-height:16px;color:#e3e3e3;transform:scaleX(0.9438);">xhr</span>
<span class="t" id="i9" style="left:406.04px;top:533.00px;font-size:15.3px;line-height:16px;color:#e3e3e3;transform:scaleX(0.9642);text-decoration:underline;text-underline-offset:2px;text-decoration-thickness:1px;width:116.95px;overflow:hidden;padding-bottom:5px;">main.ac92b29598</span>
<span class="t" id="z9" style="left:524.65px;top:533.00px;font-size:15.3px;line-height:16px;color:#e3e3e3;transform:scaleX(0.9295);">0....</span>
<span class="t" id="tm9" style="left:568.88px;top:533.00px;font-size:15.3px;line-height:16px;color:#e3e3e3;transform:scaleX(0.9724);">270 ms</span>
<span class="t" id="n10" style="left:26.14px;top:559.00px;font-size:15.3px;line-height:16px;color:#e3e3e3;transform:scaleX(0.9976);">graphql</span>
<span class="t" id="m10" style="left:223.06px;top:559.00px;font-size:15.3px;line-height:16px;color:#e3e3e3;transform:scaleX(0.8516);">POST</span>
<span class="t" id="s10" style="left:281.60px;top:559.00px;font-size:15.3px;line-height:16px;color:#e3e3e3;transform:scaleX(0.9482);">200</span>
<span class="t" id="ty10" style="left:344.65px;top:559.00px;font-size:15.3px;line-height:16px;color:#e3e3e3;transform:scaleX(0.9438);">xhr</span>
<span class="t" id="i10" style="left:406.04px;top:559.00px;font-size:15.3px;line-height:16px;color:#e3e3e3;transform:scaleX(0.9642);text-decoration:underline;text-underline-offset:2px;text-decoration-thickness:1px;width:116.95px;overflow:hidden;padding-bottom:5px;">main.ac92b29598</span>
<span class="t" id="z10" style="left:524.65px;top:559.00px;font-size:15.3px;line-height:16px;color:#e3e3e3;transform:scaleX(0.9295);">0....</span>
<span class="t" id="tm10" style="left:568.88px;top:559.00px;font-size:15.3px;line-height:16px;color:#e3e3e3;transform:scaleX(0.9724);">267 ms</span>
<span class="t" id="n11" style="left:26.14px;top:585.00px;font-size:15.3px;line-height:16px;color:#e3e3e3;transform:scaleX(0.9976);">graphql</span>
<span class="t" id="m11" style="left:223.06px;top:585.00px;font-size:15.3px;line-height:16px;color:#e3e3e3;transform:scaleX(0.8516);">POST</span>
<span class="t" id="s11" style="left:281.60px;top:585.00px;font-size:15.3px;line-height:16px;color:#e3e3e3;transform:scaleX(0.9482);">200</span>
<span class="t" id="ty11" style="left:344.65px;top:585.00px;font-size:15.3px;line-height:16px;color:#e3e3e3;transform:scaleX(0.9438);">xhr</span>
<span class="t" id="i11" style="left:406.04px;top:585.00px;font-size:15.3px;line-height:16px;color:#e3e3e3;transform:scaleX(0.9642);text-decoration:underline;text-underline-offset:2px;text-decoration-thickness:1px;width:116.95px;overflow:hidden;padding-bottom:5px;">main.ac92b29598</span>
<span class="t" id="z11" style="left:524.65px;top:585.00px;font-size:15.3px;line-height:16px;color:#e3e3e3;transform:scaleX(0.9295);">0....</span>
<span class="t" id="tm11" style="left:568.86px;top:585.00px;font-size:15.3px;line-height:16px;color:#e3e3e3;transform:scaleX(0.9728);">300 ms</span>
</div>
</body></html>
